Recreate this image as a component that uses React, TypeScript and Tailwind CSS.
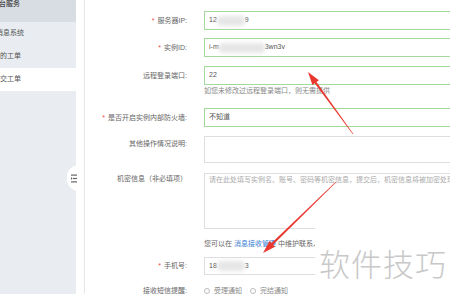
import React from "react";

const font = "font-['Liberation_Sans','Noto_Sans_CJK_SC',sans-serif]";

type Pt = [number, number];

function arrowPoints(tail: Pt, tip: Pt) {
  const dx = tip[0] - tail[0];
  const dy = tip[1] - tail[1];
  const len = Math.hypot(dx, dy);
  const ux = dx / len;
  const uy = dy / len;
  const px = -uy;
  const py = ux;
  const head = 13;
  const hw = 4;
  const bx = tip[0] - ux * head;
  const by = tip[1] - uy * head;
  const pts: Pt[] = [
    [tail[0] + px * 0.3, tail[1] + py * 0.3],
    [bx + px * 1.1, by + py * 1.1],
    [bx + px * hw, by + py * hw],
    tip,
    [bx - px * hw, by - py * hw],
    [bx - px * 1.1, by - py * 1.1],
    [tail[0] - px * 0.3, tail[1] - py * 0.3],
  ];
  return pts.map((p) => `${p[0].toFixed(1)},${p[1].toFixed(1)}`).join(" ");
}

function Blur({ w }: { w: string }) {
  return <span className={`inline-block h-[10px] ${w} bg-[#e6e6e6] blur-[2px] rounded-sm align-middle`} />;
}

function Label({ text, star, className = "" }: { text: string; star?: boolean; className?: string }) {
  return (
    <div className={`w-[102px] shrink-0 text-right text-[7px] leading-[10px] text-[#666] ${className}`}>
      {star && <span className="text-[#f04a4a] mr-[3px]">*</span>}
      {text}
    </div>
  );
}

function Field({ children, green, className = "" }: { children?: React.ReactNode; green?: boolean; className?: string }) {
  return (
    <div
      className={`ml-[17px] w-[270px] shrink-0 border ${green ? "border-[#a3d99b]" : "border-[#dedede]"} flex items-center px-[4px] text-[7px] text-[#555] ${className}`}
    >
      {children}
    </div>
  );
}

const navItems = [
  { text: "消息系统", ml: "-ml-[4px]" },
  { text: "我的工单", ml: "-ml-[7px]" },
];

export default function App() {
  return (
    <div className={`relative w-[450px] h-[294px] overflow-hidden bg-white flex ${font}`}>
      <aside className="w-[76px] shrink-0 bg-[#e9edf1] flex flex-col text-[7px] text-[#555]">
        <div className="h-[22px] bg-[#d8dce3] flex items-start">
          <span className="-ml-[8px] leading-[8px] text-[#444] font-medium whitespace-nowrap">平台服务</span>
        </div>
        {navItems.map((item) => (
          <div key={item.text} className="h-[23px] flex items-center">
            <span className={`${item.ml} whitespace-nowrap`}>{item.text}</span>
          </div>
        ))}
        <div className="h-[23px] bg-white flex items-center">
          <span className="-ml-[7px] whitespace-nowrap">提交工单</span>
        </div>
      </aside>
      <div className="w-[8px] shrink-0" />
      <main className="flex-1 border-l border-[#e6e6e6] pt-[11px] flex flex-col">
        <div className="flex items-center h-[19px]">
          <Label text="服务器IP:" star />
          <Field green className="h-[19px]">
            <span>12</span>
            <Blur w="w-[28px]" />
            <span>9</span>
          </Field>
        </div>
        <div className="flex items-center h-[19px] mt-[8px]">
          <Label text="实例ID:" star />
          <Field green className="h-[19px]">
            <span>i-m</span>
            <Blur w="w-[46px]" />
            <span>3wn3v</span>
          </Field>
        </div>
        <div className="flex items-center h-[19px] mt-[9px]">
          <Label text="远程登录端口:" />
          <Field green className="h-[19px]">22</Field>
        </div>
        <div className="flex mt-[1px] h-[10px]">
          <div className="w-[102px] shrink-0" />
          <div className="ml-[17px] text-[7px] leading-[10px] text-[#888] whitespace-nowrap">
            如您未修改过远程登录端口，则无需提供
          </div>
        </div>
        <div className="flex items-center h-[19px] mt-[12px]">
          <Label text="是否开启实例内部防火墙:" star />
          <Field green className="h-[19px]">不知道</Field>
        </div>
        <div className="flex items-start mt-[9px]">
          <Label text="其他操作情况说明:" className="pt-[3px]" />
          <Field className="h-[27px]" />
        </div>
        <div className="flex items-start mt-[10px]">
          <Label text="机密信息（非必填项）" className="pt-[1px]" />
          <div className="ml-[17px] w-[270px] h-[56px] shrink-0 border border-[#dedede] px-[4px] pt-[1px] text-[7px] leading-[10px] text-[#aaa] whitespace-nowrap overflow-hidden">
            请在此处填写实例名、账号、密码等机密信息，提交后，机密信息将被加密处理
          </div>
        </div>
        <div className="flex mt-[10px] h-[10px]">
          <div className="w-[102px] shrink-0" />
          <div className="ml-[17px] text-[7px] leading-[10px] text-[#666] whitespace-nowrap">
            您可以在 <span className="text-[#3a7fd5]">消息接收管理</span> 中维护联系人
          </div>
        </div>
        <div className="flex items-center h-[18px] mt-[8px]">
          <Label text="手机号:" star />
          <Field className="h-[18px]">
            <span>18</span>
            <Blur w="w-[28px]" />
            <span>3</span>
          </Field>
        </div>
        <div className="flex items-center h-[10px] mt-[11px]">
          <Label text="接收短信提醒:" />
          <div className="ml-[17px] flex items-center gap-[4px] text-[7px] text-[#888] whitespace-nowrap">
            <span className="w-[6px] h-[6px] rounded-full border border-[#bbb]" />
            <span>受理通知</span>
            <span className="w-[6px] h-[6px] rounded-full border border-[#bbb] ml-[4px]" />
            <span>完结通知</span>
          </div>
        </div>
      </main>

      <div className="absolute left-[67px] top-[165px] w-[12px] h-[26px] rounded-l-full bg-white flex items-center justify-center">
        <svg width="6" height="9" viewBox="0 0 6 9" className="ml-[2px]">
          <rect x="0" y="0.5" width="6" height="1.2" fill="#666" />
          <rect x="2" y="3.9" width="4" height="1.2" fill="#666" />
          <rect x="0" y="7.3" width="6" height="1.2" fill="#666" />
          <polygon points="0,3 1.6,4.5 0,6" fill="#666" />
        </svg>
      </div>

      <div className="absolute left-[315px] top-[227px] w-[140px] h-[70px] bg-white flex items-center pl-[4px]">
        <span className="text-[31px] leading-none font-light text-[#c8c8c8] tracking-[1px] font-['Noto_Sans_CJK_SC',sans-serif]">
          软件技巧
        </span>
      </div>

      <svg className="absolute inset-0 pointer-events-none" width="450" height="294">
        <polygon points={arrowPoints([353, 134], [308, 72])} fill="#e8382f" />
        <polygon points={arrowPoints([336, 182], [263, 253])} fill="#e8382f" />
      </svg>
    </div>
  );
}
